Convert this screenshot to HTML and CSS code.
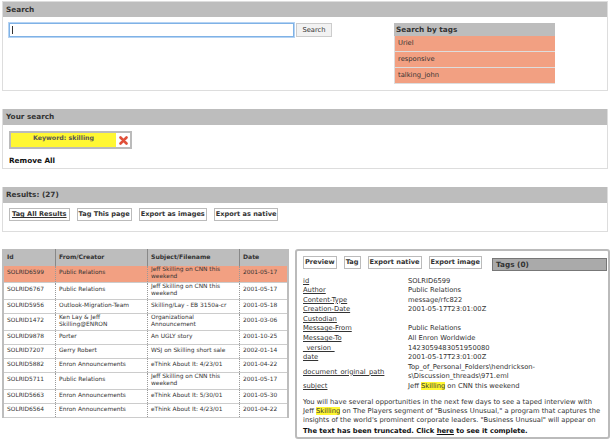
FILE: index.html
```html
<!DOCTYPE html>
<html>
<head>
    <title>Search</title>
    <link rel="stylesheet" href="styles.css">
</head>
<body>
    <section class="panel search-panel">
        <h2 class="panel-title">Search</h2>
        <div class="search-body">
            <form class="search-form">
                <input type="text" class="search-input">
                <button type="button" class="search-button">Search</button>
            </form>
            <div class="tags-box">
                <h3 class="tags-title">Search by tags</h3>
                <div class="tag-row">Uriel</div>
                <div class="tag-row">responsive</div>
                <div class="tag-row">talking_john</div>
            </div>
        </div>
    </section>

    <section class="panel your-search">
        <h2 class="panel-title">Your search</h2>
        <div class="your-body">
            <div class="keyword-box">
                <span class="keyword-label">Keyword: skilling</span>
                <span class="keyword-remove">
                    <svg width="9" height="9" viewBox="0 0 9 9">
                        <path d="M1.5 1.5 L7.5 7.5 M7.5 1.5 L1.5 7.5" stroke="#e0503a" stroke-width="2.6" stroke-linecap="round"/>
                    </svg>
                </span>
            </div>
            <div class="remove-all">Remove All</div>
        </div>
    </section>

    <section class="panel results-panel">
        <h2 class="panel-title">Results: (27)</h2>
        <div class="results-actions">
            <a class="btn btn-first">Tag All Results</a>
            <a class="btn">Tag This page</a>
            <a class="btn">Export as images</a>
            <a class="btn">Export as native</a>
        </div>
    </section>

    <div class="bottom">
        <div class="table-wrap">
            <table class="results-table">
                <thead>
                    <tr><th class="col-id">Id</th><th class="col-from">From/Creator</th><th class="col-subject">Subject/Filename</th><th class="col-date">Date</th></tr>
                </thead>
                <tbody>
                    <tr class="selected row-tall"><td>SOLRID6599</td><td>Public Relations</td><td>Jeff Skilling on CNN this weekend</td><td>2001-05-17</td></tr>
                    <tr class="row-tall"><td>SOLRID6767</td><td>Public Relations</td><td>Jeff Skilling on CNN this weekend</td><td>2001-05-17</td></tr>
                    <tr><td>SOLRID5956</td><td>Outlook-Migration-Team</td><td>Skilling/Lay - EB 3150a-cr</td><td>2001-05-18</td></tr>
                    <tr class="row-tall"><td>SOLRID1472</td><td>Ken Lay &amp; Jeff Skilling@ENRON</td><td>Organizational Announcement</td><td>2001-03-06</td></tr>
                    <tr><td>SOLRID9878</td><td>Porter</td><td>An UGLY story</td><td>2001-10-25</td></tr>
                    <tr><td>SOLRID7207</td><td>Gerry Robert</td><td>WSJ on Skilling short sale</td><td>2002-01-14</td></tr>
                    <tr><td>SOLRID5882</td><td>Enron Announcements</td><td>eThink About It: 4/23/01</td><td>2001-04-22</td></tr>
                    <tr class="row-tall"><td>SOLRID5711</td><td>Public Relations</td><td>Jeff Skilling on CNN this weekend</td><td>2001-05-17</td></tr>
                    <tr><td>SOLRID5663</td><td>Enron Announcements</td><td>eThink About It: 5/30/01</td><td>2001-05-30</td></tr>
                    <tr><td>SOLRID6564</td><td>Enron Announcements</td><td>eThink About It: 4/23/01</td><td>2001-04-22</td></tr>
                </tbody>
            </table>
        </div>

        <div class="detail">
            <div class="detail-actions">
                <a class="btn">Preview</a>
                <a class="btn">Tag</a>
                <a class="btn">Export native</a>
                <a class="btn">Export image</a>
                <div class="tags-count">Tags (0)</div>
            </div>
            <dl class="fields">
                <dt>id</dt><dd>SOLRID6599</dd>
                <dt>Author</dt><dd>Public Relations</dd>
                <dt>Content-Type</dt><dd>message/rfc822</dd>
                <dt>Creation-Date</dt><dd>2001-05-17T23:01:00Z</dd>
                <dt>Custodian</dt><dd></dd>
                <dt>Message-From</dt><dd>Public Relations</dd>
                <dt>Message-To</dt><dd>All Enron Worldwide</dd>
                <dt>_version_</dt><dd>1423059483051950080</dd>
                <dt>date</dt><dd>2001-05-17T23:01:00Z</dd>
                <dt>document_original_path</dt><dd>Top_of_Personal_Folders\hendrickson-<br>s\Discussion_threads\971.eml</dd>
                <dt>subject</dt><dd>Jeff <mark>Skilling</mark> on CNN this weekend</dd>
            </dl>
            <p class="excerpt">You will have several opportunities in the next few days to see a taped interview with<br>Jeff <mark>Skilling</mark> on The Players segment of "Business Unusual," a program that captures the<br>insights of the world's prominent corporate leaders. "Business Unusual" will appear on</p>
            <p class="truncated">The text has been truncated. Click <a href="#">here</a> to see it complete.</p>
        </div>
    </div>
</body>
</html>
```

FILE: styles.css
```css
body {
    font-family: "DejaVu Sans", Verdana, sans-serif;
    font-size: 6.75px;
    color: #333;
    background-color: white;
    text-rendering: geometricPrecision;
    margin: 0;
    padding: 1px 0 0 2px;
    width: 608px;
    height: 439px;
    overflow: hidden;
}
.panel {
    border: 1px solid #ddd;
    border-top: 0;
    box-sizing: border-box;
    width: 606px;
}
.panel-title {
    background-color: #bdbdbd;
    color: #333;
    font-size: 7.3px;
    font-weight: bold;
    margin: 0;
    height: 16px;
    line-height: 16px;
    padding-left: 3px;
}
.search-panel {
    height: 90px;
    margin-bottom: 18px;
    border-top: 1px solid #ddd;
}
.search-panel .panel-title {
    height: 15px;
}
.search-body {
    display: flex;
    padding-top: 6px;
}
.search-form {
    display: flex;
    align-items: flex-start;
    gap: 2px;
    padding-left: 6px;
    width: 385px;
}
.search-input {
    width: 282px;
    height: 12px;
    box-sizing: content-box;
    padding: 0 0 0 1px;
    border: 1px solid #7fb2e6;
    box-shadow: 0 0 0 1px #b5d3f3;
    background: white linear-gradient(#333, #333) 2px 2px / 1px 8px no-repeat;
    outline: none;
    margin: 0;
}
.search-button {
    font-family: inherit;
    font-size: 6.75px;
    color: #333;
    background-color: #f2f2f2;
    border: 1px solid #ccc;
    height: 14px;
    width: 36px;
    padding: 0;
    margin: 0;
}
.tags-box {
    width: 161px;
    background-color: #ddd;
}
.tags-title {
    background-color: #bdbdbd;
    font-size: 7.3px;
    margin: 0;
    height: 13px;
    line-height: 13px;
    padding-left: 2px;
}
.tag-row {
    background-color: #f2a082;
    height: 15px;
    line-height: 15px;
    padding-left: 3px;
    margin: 0 0 1px 1px;
}
.your-search {
    height: 60px;
    margin-bottom: 18px;
}
.your-body {
    padding: 6px 0 0 6px;
}
.keyword-box {
    display: flex;
    width: 119px;
    height: 14px;
    border: 2px solid #bbb;
    background-color: white;
    box-sizing: content-box;
}
.keyword-label {
    background-color: #fff733;
    width: 105px;
    text-align: center;
    font-weight: bold;
    font-size: 6.3px;
    line-height: 12px;
    color: #555;
}
.keyword-remove {
    display: flex;
    flex: 1;
    align-items: center;
    justify-content: center;
}
.remove-all {
    font-weight: bold;
    font-size: 7.3px;
    color: #111;
    margin-top: 7px;
}
.results-panel {
    height: 45px;
    margin-bottom: 17px;
}
.results-actions, .detail-actions {
    display: flex;
    align-items: flex-start;
    gap: 7px;
}
.results-actions {
    padding: 5px 0 0 6px;
}
.btn {
    font-weight: bold;
    font-size: 6.6px;
    color: #333;
    background-color: white;
    border: 1px solid #bbb;
    padding: 0 1px;
    height: 11px;
    line-height: 11px;
    white-space: nowrap;
}
.btn-first {
    text-decoration: underline;
    padding: 0 2px;
}
.bottom {
    display: flex;
    align-items: flex-start;
    gap: 6px;
}
.table-wrap {
    width: 287px;
    background-color: #bdbdbd;
    padding: 0 2px;
    box-sizing: border-box;
}
.results-table {
    border-collapse: collapse;
    table-layout: fixed;
    width: 283px;
    font-size: 5.9px;
}
.results-table th {
    background-color: #bdbdbd;
    text-align: left;
    font-size: 6.1px;
    height: 17px;
    padding: 0 0 0 3px;
    border-right: 1px solid #888;
}
.results-table th:last-child, .results-table td:last-child {
    border-right: 0;
}
.col-id { width: 48px; }
.col-from { width: 88px; }
.col-subject { width: 88px; }
.results-table td {
    background-color: white;
    height: 13px;
    line-height: 7.5px;
    padding: 0 3px;
    border-right: 1px dotted #999;
    border-bottom: 1px solid #ccc;
}
.results-table .row-tall td {
    height: 16px;
}
.results-table .selected td {
    background-color: #f2a082;
}
.detail {
    width: 319px;
    height: 190px;
    border: 2px solid #bbb;
    border-radius: 3px;
    box-sizing: border-box;
    padding: 5px 6px 0 6px;
    overflow: hidden;
}
.tags-count {
    font-weight: bold;
    font-size: 7.3px;
    background-color: #aaa;
    border: 1px solid #777;
    flex: 0 0 110px;
    height: 11px;
    line-height: 11px;
    padding-left: 3px;
    margin: 2px 0 0 3px;
}
.fields {
    display: grid;
    grid-template-columns: 105px 1fr;
    margin: 5.5px 0 0 0;
    line-height: 9.6px;
    align-items: center;
}
.fields dt {
    text-decoration: underline;
}
.fields dd {
    margin: 0;
    min-height: 9.6px;
}
mark {
    background-color: #fff733;
    color: inherit;
}
.excerpt {
    margin: 6.5px 0 0 0;
    line-height: 9px;
    white-space: nowrap;
}
.truncated {
    font-weight: bold;
    color: #111;
    margin: 1.5px 0 0 0;
}
.truncated a {
    color: inherit;
}
```
